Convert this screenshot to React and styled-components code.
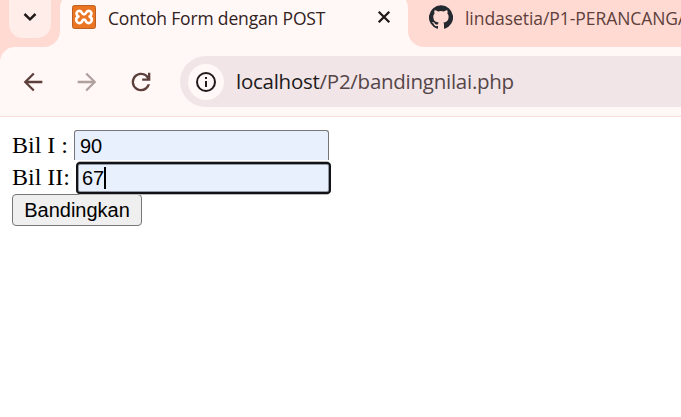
import React from 'react';
import styled, { createGlobalStyle } from 'styled-components';

const Global = createGlobalStyle`
  * { box-sizing: border-box; }
  body { margin: 0; background: #fff; overflow: hidden; }
`;
const ui = '"Open Sans", "Noto Sans", sans-serif';

const Browser = styled.div`
  width: 681px;
  height: 417px;
  overflow: hidden;
  background: #fff;
`;
const Chrome = styled.header`
  height: 117px;
  background: #fff8f6;
  border-bottom: 1px solid #fbdbd5;
`;
const TabStrip = styled.div`
  display: flex;
  height: 47px;
  background: #fff8f6;
`;
const SearchArea = styled.div`
  width: 60px;
  height: 47px;
  padding-left: 9px;
  background: #ffdad3;
  border-bottom-right-radius: 16px;
`;
const SearchButton = styled.div`
  width: 42px;
  height: 38px;
  display: flex;
  justify-content: center;
  background: #ffede9;
  border-radius: 0 0 14px 14px;
  svg { margin-top: 6px; }
`;
const ActiveTab = styled.div`
  width: 348px;
  height: 47px;
  display: flex;
  padding: 0 17px 0 12px;
  background: linear-gradient(#ffdad3, #ffdad3) 0 0 / 100% 10px no-repeat;
  position: relative;
  &::before {
    content: '';
    position: absolute;
    inset: -8px 0 0;
    border-radius: 16px 16px 0 0;
    background: #fff8f6;
  }
  > * { position: relative; flex: none; }
`;
const Favicon = styled.svg`
  flex: none;
  width: 24px;
  height: 24px;
  margin-top: 5px;
`;
const TabTitle = styled.span`
  margin-left: 12px;
  margin-top: 6px;
  flex: none;
  font: 400 17.5px/24px ${ui};
  letter-spacing: ${(p) => p.$spacing}px;
  color: ${(p) => p.$color};
  white-space: nowrap;
`;
const CloseIcon = styled.svg`
  width: 14px;
  height: 14px;
  margin: 10px 0 0 auto;
`;
const NextTab = styled.div`
  flex: 1;
  min-width: 0;
  height: 47px;
  display: flex;
  padding-left: 21px;
  overflow: hidden;
  background: #ffdad3;
  border-bottom-left-radius: 16px;
`;
const ToolbarBack = styled.div`
  background: linear-gradient(#ffdad3, #ffdad3) 0 0 / 20px 20px no-repeat;
`;
const Toolbar = styled.div`
  height: 69px;
  display: flex;
  align-items: flex-start;
  padding: 9px 0 0 19px;
  border-top-left-radius: 15px;
  background: #fff8f6;
`;
const NavIcon = styled.svg`
  flex: none;
  width: 28px;
  height: 28px;
  margin: 12px 26px 0 0;
  fill: ${(p) => (p.$muted ? '#b0a19e' : '#5d403b')};
`;
const AddressBar = styled.div`
  flex: 1;
  margin-left: -1px;
  height: 51px;
  padding-left: 8px;
  display: flex;
  align-items: center;
  border-radius: 26px 0 0 26px;
  background: #f1e5e7;
`;
const InfoBadge = styled.div`
  width: 36px;
  height: 36px;
  border-radius: 50%;
  display: grid;
  place-items: center;
  background: #fff8f6;
`;
const Url = styled.span`
  margin-left: 12px;
  padding-bottom: 2px;
  font: 400 20.5px/28px ${ui};
  letter-spacing: -0.26px;
  color: #554548;
  white-space: nowrap;
`;
const Host = styled.span`
  color: #201a1b;
`;

const Page = styled.main`
  padding: 13px 12px;
  font: 24px/30px "Liberation Serif", serif;
  color: #000;
`;
const FieldRow = styled.div`
  display: flex;
  height: 32px;
`;
const Label = styled.label`
  width: ${(p) => p.$width}px;
  white-space: pre;
`;
const Field = styled.div`
  display: flex;
  align-items: center;
  width: 255px;
  height: 30px;
  padding: 1px 0 0 5px;
  border: 1px solid #767676;
  border-bottom: 0;
  border-radius: 3px 3px 0 0;
  background: #e8f0fe;
  color: #000;
  font: 20px/24px "Liberation Sans", sans-serif;
`;
const FocusedField = styled(Field)`
  width: 251px;
  height: 28px;
  margin: 2px 0 0 2px;
  padding: 0 0 0 3px;
  border: 1px solid #959ba5;
  border-radius: 2px;
  outline: 2px solid #101218;
  box-shadow: 0 -3px 0 #b9b9b9, 0 3px 0 #b9b9b9;
`;
const Caret = styled.i`
  width: 2px;
  height: 22px;
  background: #000;
`;
const Submit = styled.button`
  display: block;
  width: 130px;
  height: 32px;
  padding: 0;
  border: 1px solid #767676;
  border-radius: 4px;
  background: #efefef;
  color: #000;
  font: 20px/28px "Liberation Sans", sans-serif;
`;

export default function App() {
  return (
    <Browser>
      <Global />
      <Chrome>
        <TabStrip>
          <SearchArea>
            <SearchButton>
              <svg width="14" height="22" viewBox="0 0 14 22" fill="none" stroke="#201a19" strokeWidth="2.5">
                <path d="M1.5 8 7 13.3 12.5 8" />
              </svg>
            </SearchButton>
          </SearchArea>
          <ActiveTab>
            <Favicon viewBox="0 0 24 24">
              <rect x=".5" y=".5" width="23" height="23" rx="2" fill="#ea7523" stroke="#bd5e22" />
              <path d="M7.5 5.9C5 5.9 4 8 4.8 9.7c.3.8 1 1.400 1.700 1.800-1.900.9-2.700 2.800-2 4.600.8 2.100 3.500 2.700 5 1.100 1-1.100.7-2.700 2.500-2.700s1.500 1.600 2.500 2.700c1.500 1.600 4.200 1 5-1.100.7-1.800-.1-3.700-2-4.600.7-.4 1.400-1 1.700-1.800.8-1.700-.2-3.800-2.700-3.800S14.400 9.500 12 9.500 10 5.900 7.500 5.900Z" fill="none" stroke="#fff" strokeWidth="2.6" strokeLinejoin="round" />
            </Favicon>
            <TabTitle $spacing={-0.16} $color="#33211e">Contoh Form dengan POST</TabTitle>
            <CloseIcon viewBox="0 0 14 14" stroke="#201a19" strokeWidth="2.3">
              <path d="m1.7 1.7 10.6 10.6M12.3 1.7 1.7 12.3" />
            </CloseIcon>
          </ActiveTab>
          <NextTab>
            <Favicon viewBox="0 0 24 24" fill="#24292f">
              <path d="M12 .3a12 12 0 0 0-3.8 23.4c.6.1.8-.3.8-.6v-2c-3.3.7-4-1.6-4-1.6-.6-1.4-1.4-1.8-1.4-1.8-1-.7.1-.7.1-.7 1.2 0 1.9 1.2 1.9 1.2 1 1.8 2.8 1.3 3.5 1 0-.8.4-1.3.7-1.6-2.7-.3-5.5-1.3-5.5-6 0-1.2.5-2.3 1.3-3.1-.2-.4-.6-1.6 0-3.2 0 0 1-.3 3.4 1.2a11.5 11.5 0 0 1 6 0c2.3-1.5 3.3-1.2 3.3-1.2.6 1.6.2 2.8 0 3.2.9.8 1.3 1.9 1.3 3.2 0 4.6-2.8 5.6-5.5 5.9.5.4.9 1 .9 2.2v3.3c0 .3.1.7.8.6A12 12 0 0 0 12 .3Z" />
            </Favicon>
            <TabTitle $spacing={-0.06} $color="#5d403b">lindasetia/P1-PERANCANGA</TabTitle>
          </NextTab>
        </TabStrip>
        <ToolbarBack>
          <Toolbar>
            <NavIcon viewBox="0 0 24 24">
              <path d="M20 11H7.8l5.6-5.6L12 4l-8 8 8 8 1.4-1.4L7.8 13H20z" />
            </NavIcon>
            <NavIcon viewBox="0 0 24 24" $muted>
              <path d="m12 4-1.4 1.4 5.6 5.6H4v2h12.2l-5.6 5.6L12 20l8-8z" />
            </NavIcon>
            <NavIcon viewBox="0 0 24 24">
              <path d="M12 20a8 8 0 1 1 6-13.3V4h2v7h-7V9h4.2A6 6 0 1 0 17.65 14h2.1A8 8 0 0 1 12 20Z" />
            </NavIcon>
            <AddressBar>
              <InfoBadge>
                <svg width="22" height="22" viewBox="0 0 22 22" fill="none" stroke="#201a1b" strokeWidth="2">
                  <circle cx="11" cy="11" r="9" />
                  <path d="M11 10v6M11 6v2" />
                </svg>
              </InfoBadge>
              <Url><Host>localhost</Host>/P2/bandingnilai.php</Url>
            </AddressBar>
          </Toolbar>
        </ToolbarBack>
      </Chrome>
      <Page>
        <FieldRow>
          <Label $width={62}>Bil I : </Label>
          <Field>90</Field>
        </FieldRow>
        <FieldRow>
          <Label $width={64}>Bil II: </Label>
          <FocusedField>67<Caret /></FocusedField>
        </FieldRow>
        <Submit>Bandingkan</Submit>
      </Page>
    </Browser>
  );
}
